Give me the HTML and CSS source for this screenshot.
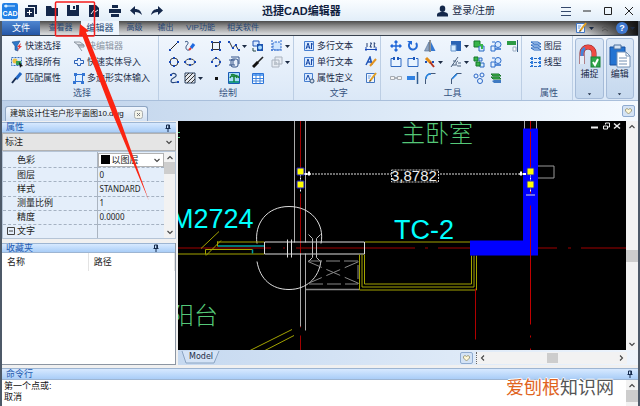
FILE: index.html
```html
<!DOCTYPE html>
<html lang="zh-CN">
<head>
<meta charset="utf-8">
<title>迅捷CAD编辑器</title>
<link rel="stylesheet" href="styles.css">
</head>
<body>
<svg class="sprite" aria-hidden="true">
  <symbol id="caret" viewBox="0 0 5 12"><path d="M0 5h5L2.500 8z" fill="#1d2c45"/></symbol>
  <symbol id="chev" viewBox="0 0 8 8"><path d="M1.500 3L4 5.500 6.500 3" fill="none" stroke="#444" stroke-width="1.100"/></symbol>
  <symbol id="pin" viewBox="0 0 8 8"><path d="M2.500 1h3v3.500M2.500 1v3.500M4.800 1v3.500M1.500 4.500h5M4 4.500V8" fill="none" stroke="#142a4c"/></symbol>
  <symbol id="heart" viewBox="0 0 8 8"><path d="M1 2.500l1.500-1L4 2.500l1.500-1L7 2.500v1.500L4 7 1 4z" fill="#fff8d8" stroke="#8d8a68" stroke-width=".8"/></symbol>
  <symbol id="line" viewBox="0 0 12 12"><path d="M2 10L10 2" stroke="#222" /><path d="M1 9h2v2H1zM9 1h2v2H9z" fill="#1849b8"/></symbol>
  <symbol id="sketch" viewBox="0 0 12 12"><path d="M1 2c3-2 4 1 2 3s-1 6 2 5" fill="none" stroke="#33507e"/><path d="M7 8l3-4" stroke="#1f6ae0" stroke-width="3"/><path d="M5 10l2-2" stroke="#d33" stroke-width="2"/></symbol>
  <symbol id="rect" viewBox="0 0 12 12"><path d="M2.500 2.500h7v7h-7z" fill="none" stroke="#333"/><path d="M1 1h2v2H1zM9 1h2v2H9zM1 9h2v2H1zM9 9h2v2H9z" fill="#1849b8"/></symbol>
  <symbol id="poly" viewBox="0 0 12 12"><path d="M1.500 2l3 6 3-3 3 5" fill="none" stroke="#333"/><path d="M0 1h2v2H0zM4 7h2v2H4zM7 4h2v2H7zM10 9h2v2h-2z" fill="#1849b8"/></symbol>
  <symbol id="block" viewBox="0 0 12 12"><path d="M1 1h6v5H1z" fill="#d9e9ff" stroke="#2055b5"/><path d="M5 4h6v7H5z" fill="#1d54b0"/><circle cx="8" cy="7.500" r="2" fill="#a8dcff"/><path d="M1 8v3h3" fill="none" stroke="#244"/></symbol>
  <symbol id="region" viewBox="0 0 12 12"><rect x="2" y="2" width="8" height="8" rx="2" fill="#cfe6ff" stroke="#2263cc" stroke-dasharray="2 1"/><path d="M1 0v12M0 10h12M10 0v3" stroke="#2263cc" stroke-dasharray="2 1"/></symbol>
  <symbol id="circle" viewBox="0 0 12 12"><circle cx="6" cy="6" r="4" fill="none" stroke="#444"/><path d="M5 1h2v2H5zM5 9h2v2H5zM1 5h2v2H1zM9 5h2v2H9z" fill="#1849b8"/></symbol>
  <symbol id="ellipse" viewBox="0 0 12 12"><ellipse cx="6" cy="6" rx="4.500" ry="3" fill="none" stroke="#444"/><path d="M5 2h2v2H5zM5 8h2v2H5zM0 5h2v2H0zM10 5h2v2h-2z" fill="#1849b8"/></symbol>
  <symbol id="arc" viewBox="0 0 12 12"><path d="M2 6c0-5 8-5 8 0 0 3-2 4-4 4" fill="none" stroke="#444"/><path d="M1 5h2v2H1zM5 1h2v2H5zM9 5h2v2H9zM5 9h2v2H5z" fill="#1849b8"/></symbol>
  <symbol id="clip" viewBox="0 0 12 12"><rect x="3" y="3" width="7" height="8" rx="2" fill="#e6eefa" stroke="#35558a"/><path d="M3 1h8v7M1 4h6M1 9h6M5 4v5" fill="none" stroke="#35558a"/></symbol>
  <symbol id="brush" viewBox="0 0 12 12"><path d="M11 1L5 7" stroke="#222" stroke-width="1.600"/><path d="M6 6L1 11" stroke="#111" stroke-width="3"/></symbol>
  <symbol id="copyGray" viewBox="0 0 12 12"><path d="M4 1h7v7H4zM1 4h7v7H1z" fill="#e7ecf3" stroke="#a9b2be"/><path d="M3 6h3v3H3z" fill="#bcc4cd"/></symbol>
  <symbol id="spline" viewBox="0 0 12 12"><path d="M3 3c2-3 6-1 5 1S3 6 3 9s5 1 7 1" fill="none" stroke="#27477d" stroke-width="1.200"/><path d="M2 2h2v2H2zM9 9h2v2H9z" fill="#1849b8"/></symbol>
  <symbol id="hatch" viewBox="0 0 12 12"><path d="M1 1h10v10H1z" fill="#e4e8ee" stroke="#2d4261"/><path d="M1 5l4-4M1 9l8-8M3 11l8-8M7 11l4-4" stroke="#333"/></symbol>
  <symbol id="dot" viewBox="0 0 12 12"><path d="M5 5h3v3H5z" fill="#111"/></symbol>
  <symbol id="image" viewBox="0 0 12 12"><path d="M.5.500h11v11H.5z" fill="#a7dcf7" stroke="#1959b5"/><path d="M1 9h10v2H1z" fill="#1e9c8c"/><path d="M6 10V5M2 6c1-3 3-2 4-1 1-2 4-2 5 1M3 3c2-1 5 0 6 3" stroke="#168238" stroke-width="1.500" fill="none"/></symbol>
  <symbol id="table" viewBox="0 0 12 12"><path d="M.5 1.500h11v10H.5z" fill="#fff" stroke="#2c74d8"/><path d="M1 2h10v2H1z" fill="#63a4f2"/><path d="M4 2v9M8 2v9M1 6.500h10M1 9h10" stroke="#4387df"/></symbol>
  <symbol id="mtext" viewBox="0 0 12 12"><path d="M1.500 1.500h9v9h-9z" fill="#d7e8ff" stroke="#477fd0"/><path d="M3 9l2-6 2 6M4 7h2M8.500 3v6M8 4h2" fill="none" stroke="#1848a4"/></symbol>
  <symbol id="attdef" viewBox="0 0 12 12"><path d="M1.500 1.500h8v8h-8z" fill="#d7e8ff" stroke="#477fd0"/><path d="M3 8l2-5 2 5" fill="none" stroke="#1848a4"/><circle cx="9" cy="9" r="2" fill="#cfd9e8" stroke="#35567f"/></symbol>
  <symbol id="ruler" viewBox="0 0 12 12"><path d="M0 9.500h12M1 7v4M11 7v4" stroke="#1849b8"/><path d="M2 3v4M5 3h1.500L5 7h2M8.500 3H10L9 5l1 2H8.500" fill="none" stroke="#203c70"/></symbol>
  <symbol id="astyle" viewBox="0 0 12 12"><path d="M1 9l4-8 2 8M3 6h4" fill="none" stroke="#1f54b8" stroke-width="1.500"/><path d="M5 10l6-7" stroke="#e39422" stroke-width="2"/></symbol>
  <symbol id="note" viewBox="0 0 12 12"><path d="M1.500 1.500h8v9h-8z" fill="#eef5ff" stroke="#4277c2"/><path d="M3 4h3M3 6h2" stroke="#74a0dc"/><path d="M5 9l6-8" stroke="#e3a022" stroke-width="2"/><path d="M4 10l2-1-1-1z" fill="#222"/></symbol>
  <symbol id="move" viewBox="0 0 12 12"><path d="M6 1v10M1 6h10M4.500 2.500L6 1l1.500 1.500M4.500 9.500L6 11l1.500-1.500M2.500 4.500L1 6l1.500 1.500M9.500 4.500L11 6 9.500 7.500" fill="none" stroke="#2167d8" stroke-width="1.400"/></symbol>
  <symbol id="rotate" viewBox="0 0 12 12"><path d="M9 3a4 4 0 1 1-5-1" fill="none" stroke="#256bd7" stroke-width="2"/><path d="M0 1h5v4z" fill="#256bd7"/></symbol>
  <symbol id="mirror" viewBox="0 0 12 12"><path d="M5 2v9H.5z" fill="#93a6bf" stroke="#496b99" stroke-width=".6"/><path d="M7 2v9h4.500z" fill="#3478d2"/><path d="M6 0v12" stroke="#333"/></symbol>
  <symbol id="scale" viewBox="0 0 12 12"><path d="M1 1h10v10H1z" fill="#2b65b5"/><path d="M1 5h5v6H1z" fill="#d5ecff" stroke="#6794cb"/></symbol>
  <symbol id="green" viewBox="0 0 12 12"><path d="M1 1h6v6H1z" fill="#38b54a" stroke="#16762c"/><path d="M6 6h5v5H6z" fill="#d5ebff" stroke="#2869c2"/><path d="M4 5h5v4" fill="none" stroke="#38b54a" stroke-width="2"/></symbol>
  <symbol id="green2" viewBox="0 0 12 12"><path d="M1 1h4v4H1z" fill="#38b54a" stroke="#16762c"/><path d="M7 7h4v4H7zM6 2h3v3H6z" fill="#d5ebff" stroke="#2869c2"/><path d="M3 6h4v4H3z" fill="#38b54a" stroke="#16762c"/></symbol>
  <symbol id="explode" viewBox="0 0 12 12"><circle cx="8" cy="4.500" r="3" fill="#d8eaff" stroke="#2b6ccb"/><path d="M1 6h4v5H1zM2 2h3" fill="#e6f2ff" stroke="#2b6ccb"/><path d="M5 9h6" stroke="#2b6ccb" stroke-width="1.500"/></symbol>
  <symbol id="align" viewBox="0 0 12 12"><path d="M0 1h9v4H0z" fill="#2d9b45"/><path d="M10.500 0v12" stroke="#375c86"/><path d="M6 7h3v4H6z" fill="#fff" stroke="#9aadc4"/></symbol>
  <symbol id="break" viewBox="0 0 12 12"><path d="M4 2.500H1v8h10v-8H8" fill="#e9f4ff" stroke="#2c69c3"/><path d="M3 1h2v3H3zM7 1h2v3H7z" fill="#1d58bd"/></symbol>
  <symbol id="break2" viewBox="0 0 12 12"><path d="M6 2.500H1v8h10v-8H9" fill="#e9f4ff" stroke="#2c69c3"/><path d="M6 1h2v3H6z" fill="#1d58bd"/></symbol>
  <symbol id="stretch" viewBox="0 0 12 12"><path d="M2 2l5 5" stroke="#e28c15" stroke-width="3"/><path d="M6 6l4 5" stroke="#b5321d" stroke-width="2"/><path d="M1 5h2v2H1zM8 5h2v2H8z" fill="#1b4fb6"/></symbol>
  <symbol id="edit" viewBox="0 0 12 12"><path d="M1 11L8 1M3 5h3M2 9h4M8 5c-3 1-2 5 0 5h3M8 7h3" fill="none" stroke="#4b607c"/></symbol>
  <symbol id="join" viewBox="0 0 12 12"><path d="M.5 4.500h4v3h-4zM7.500 4.500h4v3h-4z" fill="#f4f4f4" stroke="#a5abb2"/><path d="M5 6h2" stroke="#777"/></symbol>
  <symbol id="extend" viewBox="0 0 12 12"><path d="M0 4h8v4H0z" fill="#3182e2"/><path d="M10.500 0v12" stroke="#315d90" stroke-width="1.500"/></symbol>
  <symbol id="fillet" viewBox="0 0 12 12"><path d="M1.500 12V8c0-4 2-6 5-6.500h5" fill="none" stroke="#43597a"/><path d="M2 7c0-3 2-5 5-5" fill="none" stroke="#2684e2" stroke-width="1.500"/></symbol>
  <symbol id="chamfer" viewBox="0 0 12 12"><path d="M1.500 12V7l5-5.500h5" fill="none" stroke="#43597a"/><path d="M2 7l5-5" stroke="#2684e2" stroke-width="1.500"/></symbol>
  <symbol id="links" viewBox="0 0 12 12"><circle cx="3" cy="4" r="2" fill="#e4f2ff" stroke="#2c66c5"/><circle cx="9" cy="3" r="2" fill="#e4f2ff" stroke="#2c66c5"/><circle cx="7" cy="9" r="2.500" fill="#e4f2ff" stroke="#2c66c5"/></symbol>
  <symbol id="stack" viewBox="0 0 12 12"><path d="M1 2h8l2 2H3zM1 5h8l2 2H3z" fill="#45ba51" stroke="#19772b"/><path d="M2 9l2-1h7v3H4z" fill="#3f7ac2"/></symbol>
  <symbol id="layers" viewBox="0 0 12 12"><path d="M1 2h7l3 2H4zM1 5h7l3 2H4zM1 8h7l3 2H4z" fill="#e2f1ff" stroke="#2565be"/></symbol>
  <symbol id="ltype" viewBox="0 0 12 12"><path d="M0 2.500h12M0 6.500h12M0 10.500h12" stroke="#2565be" stroke-dasharray="3 1"/><path d="M2 1v10M10 1v10" stroke="#2d7de0" stroke-width="2" stroke-dasharray="3 1"/></symbol>
  <symbol id="quick" viewBox="0 0 12 12"><path d="M1 2l8-1-3 5 1 5-3-1V6z" fill="#2d78c9" stroke="#1a4f91" stroke-width=".6"/><path d="M10 3L6 7h2l-2 4 5-5H9z" fill="#e43a3a"/></symbol>
  <symbol id="selall" viewBox="0 0 12 12"><path d="M.5 1.500h10v8H.5z" fill="#d3e7ff" stroke="#3b70b8" stroke-dasharray="2 1"/><circle cx="4" cy="5" r="2.500" fill="#edc142"/><path d="M5 5h5v4H5z" fill="#39a057"/><path d="M8 6l4 4-2 .4L9 12z" fill="#111"/></symbol>
  <symbol id="match" viewBox="0 0 12 12"><path d="M10 1L5 7" stroke="#2267c4" stroke-width="3"/><path d="M5 6L1 11" stroke="#172b4e" stroke-width="2"/></symbol>
  <symbol id="fastedit" viewBox="0 0 12 12"><path d="M1 2h6l4 3H5zM5 5h6v2H6zM6 7l3 4" fill="#e0e4e9" stroke="#8e98a4"/></symbol>
  <symbol id="cross" viewBox="0 0 12 12"><path d="M4.500 2.500h3v2h3v3h-3v2h-3v-2h-3v-3h3z" fill="#e8f2ff" stroke="#2b60b6"/></symbol>
  <symbol id="polyin" viewBox="0 0 12 12"><path d="M2.500 2.500h7v7h-7z" fill="#dfefff" stroke="#2d70d4"/><path d="M1 1h3v3H1zM9 1h3v3H9zM0 9h3v3H0zM8 9h3v3H8z" fill="#3475d3"/></symbol>
</svg>

<div class="app">
  <header class="titlebar">
    <div class="quick">
      <svg class="logo" viewBox="0 0 16 16"><rect width="16" height="16" rx="2" fill="#2080e6"/><path d="M2 3h11" stroke="#d9efff"/><circle cx="4" cy="3" r="1.500" fill="#d9efff"/><text x="8" y="13" text-anchor="middle">CAD</text></svg>
      <button aria-label="新建"><svg viewBox="0 0 12 12"><path d="M3 0h9v9h-2V2H3zM0 3h9v9H0z" fill="#14284b"/><path d="M4.500 5v5M2 7.500h5" stroke="#fff"/></svg></button>
      <button aria-label="打开"><svg viewBox="0 0 12 12"><path d="M0 1h5l1 2h6v8H0z" fill="#14284b"/></svg></button>
      <button aria-label="保存"><svg viewBox="0 0 12 12"><path d="M0 0h12v11H0z" fill="#14284b"/><path d="M3 0h6v5H3z" fill="#f0f7fd"/><path d="M6 1h2v3H6z" fill="#14284b"/></svg></button>
      <button aria-label="另存为"><svg viewBox="0 0 12 12"><path d="M1 0h7l3 3v9H1z" fill="#14284b"/><path d="M3 9l3-4 1 2 3-2" fill="none" stroke="#fff"/></svg></button>
      <button aria-label="打印"><svg viewBox="0 0 12 12"><path d="M3 0h6v3H3zM0 4h12v4H0zM2 9h8v3H2z" fill="#14284b"/></svg></button>
      <button aria-label="撤销"><svg viewBox="0 0 12 12"><path d="M5 1v3c4 0 6 2 7 6-2-2-4-3-7-3v3L0 5.500z" fill="#14284b"/></svg></button>
      <button aria-label="重做"><svg viewBox="0 0 12 12"><path d="M7 1v3C3 4 1 6 0 10c2-2 4-3 7-3v3l5-4.500z" fill="#14284b"/></svg></button>
    </div>
    <h1>迅捷CAD编辑器</h1>
    <div class="account">
      <a href="#"><svg viewBox="0 0 12 12"><ellipse cx="6" cy="3.500" rx="3" ry="3.500" fill="#14284b"/><path d="M0 12V9.500Q0 8 4 7h4q4 1 4 2.500V12z" fill="#14284b"/></svg>登录/注册</a>
      <div class="win">
        <button aria-label="菜单"><svg viewBox="0 0 10 10"><path d="M0 1.500h10M0 5.500h10M0 9.500h10" stroke="#35496c"/></svg></button>
        <button aria-label="最小化"><svg viewBox="0 0 10 10"><path d="M1 5h8" stroke="#222"/></svg></button>
        <button aria-label="最大化"><svg viewBox="0 0 10 10"><path d="M1.500 1.500h7v7h-7z" fill="none" stroke="#222"/></svg></button>
        <button aria-label="关闭"><svg viewBox="0 0 10 10"><path d="M1 1l8 8M9 1L1 9" stroke="#222"/></svg></button>
      </div>
    </div>
  </header>

  <div class="frame">
    <nav class="tabs">
      <a class="file" href="#">文件</a><a class="t" href="#">查看器</a><a class="t on" href="#">编辑器</a><a class="t" href="#">高级</a><a class="t" href="#">输出</a><a class="t wide" href="#">VIP功能</a><a class="t wide" href="#">相关软件</a>
      <div class="tabtools">
        <button aria-label="样式"><svg class="i" viewBox="0 0 12 12"><use href="#note"/></svg><svg class="c"><use href="#caret"/></svg></button>
        <button aria-label="折叠"><svg class="i" viewBox="0 0 12 12"><path d="M3 6l3-2 3 2M3 9l3-2 3 2" fill="none" stroke="#555"/></svg></button>
        <button aria-label="帮助"><svg class="i" viewBox="0 0 12 12"><circle cx="6" cy="6" r="6" fill="#3f78cf"/><text class="q" x="6" y="9" text-anchor="middle">?</text></svg><svg class="c"><use href="#caret"/></svg></button>
      </div>
    </nav>

    <section class="ribbon">
      <div class="group g-select">
        <div class="cells">
          <button><svg class="i"><use href="#quick"/></svg>快速选择</button><button class="off"><svg class="i"><use href="#fastedit"/></svg>快编辑器</button>
          <button><svg class="i"><use href="#selall"/></svg>选择所有</button><button><svg class="i"><use href="#cross"/></svg>快速实体导入</button>
          <button><svg class="i"><use href="#match"/></svg>匹配属性</button><button><svg class="i"><use href="#polyin"/></svg>多边形实体输入</button>
        </div>
        <h2>选择</h2>
      </div>
      <div class="group g-draw">
        <div class="cells">
          <button aria-label="直线"><svg class="i"><use href="#line"/></svg></button><button aria-label="手绘"><svg class="i"><use href="#sketch"/></svg></button><button aria-label="矩形"><svg class="i"><use href="#rect"/></svg></button><button aria-label="多段线"><svg class="i"><use href="#poly"/></svg><svg class="c"><use href="#caret"/></svg></button><button aria-label="块"><svg class="i"><use href="#block"/></svg></button><button aria-label="面域"><svg class="i"><use href="#region"/></svg><svg class="c"><use href="#caret"/></svg></button>
          <button aria-label="圆"><svg class="i"><use href="#circle"/></svg></button><button aria-label="椭圆"><svg class="i"><use href="#ellipse"/></svg></button><button aria-label="圆弧"><svg class="i"><use href="#arc"/></svg></button><button aria-label="裁剪"><svg class="i"><use href="#clip"/></svg></button><button aria-label="画笔"><svg class="i"><use href="#brush"/></svg></button><button class="off" aria-label="复制"><svg class="i"><use href="#copyGray"/></svg><svg class="c"><use href="#caret"/></svg></button>
          <button aria-label="样条"><svg class="i"><use href="#spline"/></svg></button><button aria-label="填充"><svg class="i"><use href="#hatch"/></svg><svg class="c"><use href="#caret"/></svg></button><button aria-label="点"><svg class="i"><use href="#dot"/></svg></button><button aria-label="图像"><svg class="i"><use href="#image"/></svg></button><button aria-label="表格"><svg class="i"><use href="#table"/></svg></button>
        </div>
        <h2>绘制</h2>
      </div>
      <div class="group g-text">
        <div class="cells">
          <button><svg class="i"><use href="#mtext"/></svg>多行文本</button><button aria-label="标尺"><svg class="i"><use href="#ruler"/></svg></button>
          <button><svg class="i"><use href="#mtext"/></svg>单行文本</button><button aria-label="文字样式"><svg class="i"><use href="#astyle"/></svg></button>
          <button><svg class="i"><use href="#attdef"/></svg>属性定义</button><button aria-label="编辑文字"><svg class="i"><use href="#note"/></svg></button>
        </div>
        <h2>文字</h2>
      </div>
      <div class="group g-tools">
        <div class="cells">
          <button aria-label="移动"><svg class="i"><use href="#move"/></svg></button><button aria-label="旋转"><svg class="i"><use href="#rotate"/></svg></button><button aria-label="镜像"><svg class="i"><use href="#mirror"/></svg></button><button aria-label="缩放"><svg class="i"><use href="#scale"/></svg><svg class="c"><use href="#caret"/></svg></button><button aria-label="阵列"><svg class="i"><use href="#green"/></svg></button><button aria-label="分解"><svg class="i"><use href="#explode"/></svg></button><button aria-label="对齐"><svg class="i"><use href="#align"/></svg></button>
          <button aria-label="打断"><svg class="i"><use href="#break"/></svg></button><button aria-label="打断于点"><svg class="i"><use href="#break2"/></svg></button><button aria-label="拉伸"><svg class="i"><use href="#stretch"/></svg><svg class="c"><use href="#caret"/></svg></button><button aria-label="修剪"><svg class="i"><use href="#edit"/></svg><svg class="c"><use href="#caret"/></svg></button><button aria-label="成组"><svg class="i"><use href="#green2"/></svg></button><button aria-label="偏移"><svg class="i"><use href="#explode"/></svg></button><span></span>
          <button aria-label="合并"><svg class="i"><use href="#join"/></svg></button><button aria-label="延伸"><svg class="i"><use href="#extend"/></svg></button><button aria-label="圆角"><svg class="i"><use href="#fillet"/></svg></button><button aria-label="倒角"><svg class="i"><use href="#chamfer"/></svg></button><button aria-label="链接"><svg class="i"><use href="#links"/></svg></button><button aria-label="次序"><svg class="i"><use href="#stack"/></svg></button>
        </div>
        <h2>工具</h2>
      </div>
      <div class="group g-prop">
        <div class="cells">
          <button><svg class="i"><use href="#layers"/></svg>图层</button>
          <button><svg class="i"><use href="#ltype"/></svg>线型</button>
        </div>
        <h2>属性</h2>
      </div>
      <div class="bigs">
        <button class="big"><svg class="bi" viewBox="0 0 22 24"><path d="M3 20V9a6 6 0 0 1 12 0v9" fill="none" stroke="#8d1f1f" stroke-width="5"/><path d="M3 20V9a6 6 0 0 1 12 0v9" fill="none" stroke="#ee4a43" stroke-width="4"/><path d="M3 20v-8" stroke="#e4edf7" stroke-width="4"/><path d="M3 12V9a6 6 0 0 1 3-5" fill="none" stroke="#4384d9" stroke-width="3"/><rect x="12" y="13" width="9" height="10" fill="#2fa648" stroke="#188034"/><path d="M14 18l2 3 3-6" fill="none" stroke="#fff" stroke-width="2"/></svg>捕捉<svg class="c"><use href="#caret"/></svg></button>
        <button class="big"><svg class="bi" viewBox="0 0 22 24"><path d="M1 3h15v18H1z" fill="#2474d2" stroke="#174e9c"/><path d="M5 1h7v4H5z" fill="#d5e3f3" stroke="#4d719d"/><path d="M8 8h9l4 4v11H8z" fill="#fff" stroke="#7390b4"/><path d="M17 8v4h4M10 14h8M10 17h8M10 20h8" fill="none" stroke="#7390b4"/></svg>编辑<svg class="c"><use href="#caret"/></svg></button>
      </div>
    </section>

    <div class="doctabs">
      <div class="doc">建筑设计住宅户形平面图10.dwg<button aria-label="关闭图纸"><svg viewBox="0 0 9 9"><rect x=".5" y=".5" width="8" height="8" rx="2" fill="#f4f4e9" stroke="#a9adb0"/><path d="M3 3l3 3M6 3L3 6" stroke="#77797c"/></svg></button></div>
      <button class="heart" aria-label="收藏"><svg><use href="#heart"/></svg></button>
    </div>

    <main class="work">
      <aside class="dock">
        <section class="props">
          <h3>属性<svg><use href="#pin"/></svg></h3>
          <div class="combo"><select aria-label="对象"><option>标注</option></select><svg><use href="#chev"/></svg></div>
          <div class="gridwrap">
            <table>
              <tr><th>色彩</th><td class="color"><div class="combo white"><i></i><select aria-label="色彩"><option>以图层</option></select><svg><use href="#chev"/></svg></div></td></tr>
              <tr><th>图层</th><td>0</td></tr>
              <tr><th>样式</th><td>STANDARD</td></tr>
              <tr><th>测量比例</th><td>1</td></tr>
              <tr><th>精度</th><td>0.0000</td></tr>
              <tr class="sub"><th><svg viewBox="0 0 8 8"><path d="M.5.500h7v7h-7zM2 4h4" fill="none" stroke="#444"/></svg>文字</th><td></td></tr>
            </table>
            <div class="vs"><svg class="up"><use href="#chev"/></svg><i></i><svg><use href="#chev"/></svg></div>
          </div>
        </section>
        <section class="favs">
          <h3>收藏夹<svg class="inset"><use href="#pin"/></svg></h3>
          <table><tr><th>名称</th><th>路径</th></tr></table>
        </section>
      </aside>

      <section class="view">
        <div class="canvasrow">
          <svg class="cad" viewBox="178 120 448 230" preserveAspectRatio="xMidYMid slice">
            <rect x="178" y="120" width="448" height="230" fill="#000"/>
            <g fill="none" stroke="#a00000"><path d="M300.500 120v53M300.500 193V327M300.500 335v15" stroke-width="1"/><path d="M178 247.500h93M283 247.500h2M296 247.500h119M425 247.500h3M438 247.500h119M568 247.500h3M581 247.500h45"/></g>
            <g fill="none" stroke="#aaa"><path d="M294.500 120v122M305.500 120v122M300.500 253v73M305.500 253v77M524.500 120v10M536.500 120v10"/></g>
            <g fill="none" stroke="#ddd"><path d="M257 243c-3-20 10-37 32-37s36 17 32 37M257 261c3 18 15 28 32 28s30-11 32-29"/><path d="M264.500 241.500h100v12h-100zM287.500 239v18M291.500 239v18"/><path d="M312.500 257V238l-4-4M316.500 257V238l4-4M312.500 257l-4 4M316.500 257l4 4" stroke="#bbb"/></g>
            <g fill="none" stroke="#888"><path d="M308 260.500h50v23h-50" stroke-dasharray="14 4"/><path d="M308 261l51 22M308 283l51-22" stroke-dasharray="15 5"/><path d="M306 289h53" stroke-width="1.500"/></g>
            <g fill="none" stroke="#a3a300"><path d="M178 253.500h86M217 241.500h47M217.500 241v5M205.500 249h47M205.500 249v5M201 248l18-17M206 255l15-15M365 241.500h106"/><path d="M359.500 254v35.500h117V255M362 254v32.500h112V255M364.500 254v29.500h107V255"/><path d="M248 351l44-22M263 351l31-16"/></g>
            <path d="M218 245.500h46M252.500 249v4" stroke="#009f9f" fill="none" stroke-width="1.500"/>
            <g fill="none" stroke="#999"><path d="M537 165.500h17v12h-17"/></g>
            <path d="M475.500 288v51" stroke="#b00000"/>
            <path d="M523 128h15v127h-68v-15h53z" fill="#00f"/>
            <path d="M530.500 120v9M530.500 131v43M530.500 188v5M530.500 205v119M530.500 335v2M530.500 348v2" stroke="#c00000"/>
            <path d="M526 194.500h9" stroke="#ddd"/>
            <path d="M306 173.500h86M440 173.500h82" stroke="#ddd" stroke-dasharray="2 1"/>
            <path d="M300.500 171v20M530.500 171v20" stroke="#fff" stroke-dasharray="2 1"/>
            <path d="M304 173.500h3M309 171v4M523 173.500h3M521 171v4" stroke="#fff" stroke-width="2"/><path d="M304 173.500h7M519 173.500h7" stroke="#fff"/>
            <path d="M391.500 169.500h47v12h-47z" fill="none" stroke="#ccc" stroke-dasharray="2 1"/>
            <g fill="#ff0" stroke="#1919c8"><path d="M297 167.500h7v7h-7zM297 180.500h7v7h-7zM527 167.500h7v7h-7zM527 180.500h7v7h-7z"/></g>
            <text class="dim" x="391" y="180">3,8782</text>
            <text class="cy" x="171" y="227">M2724</text>
            <text class="cy" x="394" y="238">TC-2</text>
            <text class="gr" x="401" y="141">主卧室</text>
            <text class="gr" x="170" y="323">阳台</text>
            <path d="M178 132h2M178 137h2" stroke="#55c878"/>
            <g stroke="#eee" fill="none"><path d="M591 127h7" stroke-width="2"/><path d="M603.500 125.500h4v3h-4zM605.500 124v-1.500h4v4h-1.500"/><path d="M614 123l6 5M620 123l-6 5" stroke-width="1.500"/></g>
          </svg>
          <div class="vs wide"><svg class="up"><use href="#chev"/></svg><i class="mid"></i><svg><use href="#chev"/></svg></div>
        </div>
        <div class="bottom">
          <div class="model"><svg viewBox="0 0 40 13" preserveAspectRatio="none"><path d="M1 0l4 12h28l5-12" fill="#d4e3f6" stroke="#8ba4c2"/></svg><a href="#">Model</a></div>
          <button class="heart" aria-label="收藏"><svg><use href="#heart"/></svg></button>
          <div class="hs"><svg class="left"><use href="#chev"/></svg><i></i><svg class="right"><use href="#chev"/></svg></div>
        </div>
      </section>
    </main>

    <section class="cmd">
      <h3>命令行<svg><use href="#pin"/></svg></h3>
      <div class="cmdrow"><p>第一个点或:<br>取消</p><div class="vs wide"><svg class="up"><use href="#chev"/></svg><i></i></div></div>
    </section>
  </div>

  <svg class="mark" viewBox="0 0 640 406"><rect x="55.500" y="2" width="39" height="34" rx="1" fill="none" stroke="#f51d1d" stroke-width="1.500"/><path d="M80 24l-1 12 3-1 29 75 38 91-33-93-30-76 3-1z" fill="#fb2412"/></svg>
  <div class="watermark"><b>爱刨根</b>知识网</div>
</div>
</body>
</html>
```
FILE: styles.css
```css
* { box-sizing: border-box; }
body {
  margin: 0;
  font: 9px/12px "Liberation Sans", "Noto Sans CJK SC", sans-serif;
  color: #1b2c48;
}
h1, h2, h3, p { margin: 0; font-weight: 400; }
button {
  display: flex;
  align-items: center;
  padding: 0;
  border: 0;
  background: none;
  color: inherit;
  font: inherit;
  white-space: nowrap;
}
a { color: inherit; text-decoration: none; }
svg { display: block; flex: none; }
.sprite { position: absolute; width: 0; height: 0; }
.i { width: 12px; height: 12px; }
.c { width: 5px; height: 12px; }

.app {
  position: relative;
  display: flex;
  flex-direction: column;
  height: 100vh;
  overflow: hidden;
}

/* Title bar */
.titlebar {
  display: grid;
  grid-template-columns: 47fr auto 53fr;
  align-items: center;
  flex: none;
  height: 21px;
  padding: 0 6px 0 2px;
  background: linear-gradient(#fafdff, #e2eef9);
}
.quick { display: flex; align-items: center; gap: 9px; }
.quick button svg { width: 12px; height: 12px; }
.quick .logo { width: 16px; height: 16px; margin-right: -2px; }
.logo text { font: 700 7px "Liberation Sans", sans-serif; fill: #fff; }
h1 { font-size: 11px; font-weight: 700; color: #10213f; }
.account { display: flex; justify-content: flex-end; align-items: center; gap: 66px; }
.account a { display: flex; align-items: center; gap: 4px; font-size: 10px; white-space: nowrap; }
.account a svg { width: 11px; height: 12px; }
.win { display: flex; gap: 11px; }
.win svg { width: 10px; height: 10px; }

.frame {
  display: flex;
  flex: 1;
  flex-direction: column;
  min-height: 0;
  border: solid #4d5968;
  border-width: 0 2px;
  background: #f0f0f0;
}

/* Ribbon tabs */
.tabs {
  display: flex;
  flex: none;
  height: 15px;
  border-bottom: 1px solid #38424f;
  background: linear-gradient(#4c4c4c, #8b8b8b 35%, #d2d4d6 90%);
  color: #274674;
  font-size: 8px;
  line-height: 14px;
}
.tabs > a { text-align: center; }
.tabs .file { width: 38px; background: linear-gradient(#4f86d0, #2456a6); color: #fff; font-size: 9px; }
.tabs .t { width: 31px; }
.tabs .t:nth-child(2) { width: 41px; }
.tabs .t.on { width: 38px; background: #eef5fd; font-size: 9px; }
.tabs .wide:nth-child(6) { width: 39px; }
.tabs .wide:nth-child(7) { width: 46px; }
.tabtools {
  display: flex;
  flex: 1;
  justify-content: flex-end;
  gap: 5px;
  padding-right: 3px;
  background: linear-gradient(90deg, transparent 85%, #111);
}
.tabtools button { gap: 2px; }
.q { font: 700 9px "Liberation Sans", sans-serif; fill: #fff; }

/* Ribbon */
.ribbon {
  display: flex;
  flex: none;
  height: 65px;
  border-bottom: 1px solid #a9bfdb;
  background: linear-gradient(#f0f6fd, #dbe8f7);
}
.group {
  display: flex;
  flex-direction: column;
  padding-top: 2px;
  border-right: 1px solid #bccee4;
}
.group h2 { padding-left: 4px; font-size: 9px; line-height: 14px; text-align: center; color: #35527e; }
.cells { display: grid; grid-auto-rows: 16px; align-items: center; height: 48px; }
.cells button { gap: 2px; }
.off { color: #8c96a3; }
.g-select { flex: 157 0 0; }
.g-select .cells { grid-template-columns: 62px 1fr; padding-left: 9px; }
.g-draw { flex: 131 0 0; }
.g-draw .cells { grid-template-columns: 16px 26px 18px 24px 19px 22px; padding-left: 9px; }
.g-text { flex: 86 0 0; }
.g-text .cells { grid-template-columns: 62px 12px; padding-left: 9px; }
.g-tools { flex: 141 0 0; }
.g-tools .cells { grid-template-columns: 17px 17px 26px 23px 17px 17px 12px; padding-left: 9px; }
.g-prop { flex: 51 0 0; }
.g-prop .cells { grid-template-columns: 1fr; padding-left: 8px; }
.bigs { display: flex; flex: 59 0 0; gap: 2px; padding: 2px 4px 1px 2px; }
.big {
  flex: 1;
  flex-direction: column;
  padding-top: 5px;
  border: 1px solid #a5bbd8;
  border-radius: 3px;
  background: linear-gradient(#dce8f6, #c5d8ee);
}
.big .bi { width: 22px; height: 24px; }
.big .c { height: 8px; margin-top: auto; }

/* Document tabs */
.doctabs {
  display: flex;
  flex: none;
  align-items: flex-end;
  justify-content: space-between;
  height: 20px;
  padding: 0 3px;
  background: linear-gradient(90deg, #bcd0e9, #dce9f7 60%, #f5faff);
}
.doc {
  display: flex;
  align-items: center;
  gap: 10px;
  height: 15px;
  padding: 0 4px;
  border: solid #8fa6c3;
  border-width: 1px 1px 0;
  border-radius: 3px 3px 0 0;
  background: linear-gradient(#f0f6fd, #d2e1f3);
  font-size: 8px;
  color: #111;
}
.doc svg { width: 9px; height: 9px; }
.heart {
  align-self: center;
  padding: 1px;
  border: 1px solid #8fabd0;
  border-radius: 2px;
  background: #d4e3f5;
}
.heart svg { width: 9px; height: 8px; }

/* Docked panels */
.work { display: flex; flex: 1; min-height: 0; gap: 2px; }
.dock { display: flex; flex: 0 0 174px; flex-direction: column; gap: 4px; padding-top: 1px; }
h3 {
  display: flex;
  flex: none;
  align-items: center;
  justify-content: space-between;
  height: 11px;
  padding: 0 4px;
  border: 1px solid #9db5d2;
  border-width: 1px 0;
  background: linear-gradient(#d7e9ff, #a9cdf7);
  color: #235ab0;
  font-size: 9px;
  line-height: 9px;
}
h3 svg { width: 8px; height: 8px; }
h3 .inset { margin-right: 11px; }
.props { display: flex; flex-direction: column; }
.combo {
  display: flex;
  align-items: center;
  height: 18px;
  padding: 0 2px;
  border: 1px solid #b2b2b2;
  background: #e5e5e5;
}
.combo select {
  flex: 1;
  min-width: 0;
  padding: 0;
  border: 0;
  appearance: none;
  background: none;
  color: #222;
  font: inherit;
}
.combo svg { width: 8px; height: 8px; }
.combo.white { height: 14px; background: #fff; }
.combo i { width: 9px; height: 9px; margin-right: 2px; background: #000; }
.gridwrap { display: flex; height: 88px; border: 1px solid #b5c4d6; }
.gridwrap table { flex: 1; border-collapse: collapse; background: #e4eefa; color: #222; table-layout: fixed; }
.gridwrap th { width: 94px; padding: 0 0 0 14px; border-right: 1px solid #aab4c0; border-bottom: 1px dashed #a5b2c2; font-weight: 400; text-align: left; }
.gridwrap td { padding: 0 0 0 2px; border-bottom: 1px dashed #a5b2c2; font: 8px/12px "Noto Sans", sans-serif; }
.gridwrap .color { padding: 0; font: inherit; }
.gridwrap .sub th { padding-left: 4px; border-bottom: 0; }
.gridwrap .sub td { border-bottom: 0; }
.sub svg { display: inline-block; width: 8px; height: 8px; margin-right: 2px; vertical-align: -1px; }
.vs { display: flex; flex: 0 0 11px; flex-direction: column; justify-content: space-between; align-items: center; padding: 2px 0; background: #f2f2f2; }
.vs svg, .hs svg { width: 8px; height: 8px; }
.vs i { width: 100%; height: 12px; margin-bottom: auto; background: #cdcdcd; }
.vs .mid { margin: auto 0 auto; transform: translateY(20px); }
.vs.wide { flex-basis: 12px; }
.up { transform: rotate(180deg); }
.left { transform: rotate(90deg); }
.right { transform: rotate(-90deg); }
.favs { display: flex; flex: 1; flex-direction: column; border: solid #8c96a3; border-width: 0 1px 1px 0; background: #fff; }
.favs h3 { height: 10px; }
.favs table { width: 100%; border-collapse: collapse; color: #222; }
.favs th { width: 50%; height: 18px; padding: 0 5px; border-right: 1px solid #e3e3e3; font-weight: 400; text-align: left; }

/* Drawing view */
.view { display: flex; flex: 1; flex-direction: column; min-width: 0; }
.canvasrow { display: flex; flex: 1; min-height: 0; }
.cad { flex: 1; width: 0; height: 100%; }
.cad .dim { font: 15px "Liberation Sans", sans-serif; fill: #eee; }
.cad .cy { font: 27px "Liberation Sans", sans-serif; fill: #0ff; }
.cad .gr { font: 300 24px "Noto Sans CJK SC", sans-serif; fill: #55c878; }
.bottom { display: flex; flex: none; align-items: center; height: 15px; background: linear-gradient(90deg, #c6d9f0, #edf4fc); }
.model { position: relative; margin-right: auto; padding: 0 14px 2px 11px; font: 8px/12px "DejaVu Sans", sans-serif; }
.model svg { position: absolute; inset: 0; left: 3px; width: 40px; height: 13px; }
.model a { position: relative; }
.hs { display: flex; flex: 0 0 151px; align-items: center; justify-content: space-between; height: 12px; margin: 0 11px 0 3px; padding: 0 2px; border-left: 1px dotted #666; background: #f2f2f2; }
.hs i { width: 11px; height: 10px; background: #cdcdcd; }

/* Command line */
.cmd { flex: none; margin-top: 3px; }
.cmd h3 { height: 12px; }
.cmdrow { display: flex; height: 26px; background: #fff; color: #111; }
.cmdrow p { flex: 1; padding: 1px 2px; line-height: 11px; }

/* Annotation layer */
.mark { position: absolute; top: 0; left: 0; width: 640px; height: 406px; pointer-events: none; }
.watermark {
  position: absolute;
  right: 26px;
  bottom: 7px;
  color: #555;
  font-size: 18px;
  line-height: 22px;
  text-shadow: 1px 0 #fff, -1px 0 #fff, 0 1px #fff, 0 -1px #fff;
}
.watermark b { color: #e0641e; font-weight: 400; }
```
